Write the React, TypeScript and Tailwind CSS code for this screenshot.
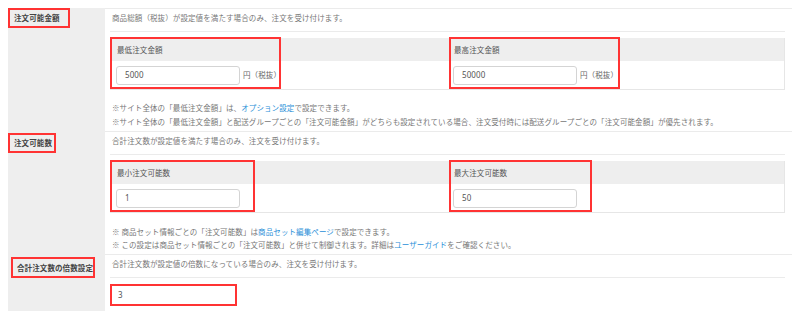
import * as React from "react";

const FONT = {
  fontFamily: '"Noto Sans CJK JP", "Noto Sans", sans-serif',
};
const NUM_FONT = {
  fontFamily: '"Noto Sans", "Noto Sans CJK JP", sans-serif',
};

function Label({ text, box }: { text: string; box: string }) {
  return (
    <div className="relative h-full w-[97px] shrink-0 bg-[#eeeeee]">
      <div
        className={`absolute flex items-center border-2 border-[#ff3333] pl-[4px] text-[7.5px] font-semibold text-[#444] ${box}`}
      >
        {text}
      </div>
    </div>
  );
}

function Desc({ children }: { children: React.ReactNode }) {
  return (
    <div className="h-[23px] border-b border-[#ebebeb] pl-[2px] pt-[3px] text-[7.5px] leading-[12px] text-[#777]">
      {children}
    </div>
  );
}

function Field({
  title,
  value,
  unit,
  boxWidth,
}: {
  title: string;
  value: string;
  unit?: string;
  boxWidth: string;
}) {
  return (
    <div className="relative flex-1">
      <div className="flex h-[23px] items-center bg-[#eeeeee] pl-[7px] text-[7.5px] text-[#555]">
        {title}
      </div>
      <div className="flex h-[28px] items-center pl-[6px]">
        <div
          className="flex h-[19px] w-[124px] items-center rounded-[3px] border border-[#d4d4d4] bg-white pl-[8px] text-[8px] text-[#555]"
          style={NUM_FONT}
        >
          {value}
        </div>
        {unit && <span className="ml-[3px] text-[7.5px] text-[#666]">{unit}</span>}
      </div>
      <div
        className={`pointer-events-none absolute -top-px h-[52px] border-2 border-[#ff3333] ${boxWidth}`}
      />
    </div>
  );
}

const Link = ({ children }: { children: React.ReactNode }) => (
  <span className="text-[#2a8fd8]">{children}</span>
);

export default function App() {
  return (
    <div className="h-[321px] w-[800px] bg-white px-2 pt-2 tracking-[0.1px]" style={FONT}>
      {/* 注文可能金額 */}
      <div className="flex h-[123px]">
        <Label text="注文可能金額" box="left-0 top-0 h-[20px] w-[62px]" />
        <div className="flex-1 border-t border-[#ebebeb] pl-[5px] pr-[7px]">
          <Desc>商品総額（税抜）が設定値を満たす場合のみ、注文を受け付けます。</Desc>
          <div className="mt-[6px] flex border-b border-r border-[#e6e6e6]">
            <Field title="最低注文金額" value="5000" unit="円（税抜）" boxWidth="left-0 w-[171px]" />
            <Field title="最高注文金額" value="50000" unit="円（税抜）" boxWidth="left-[2px] w-[171px]" />
          </div>
          <div className="mt-[11px] pl-[2px] text-[7.5px] leading-[14px] text-[#777]">
            <div>
              ※サイト全体の「最低注文金額」は、<Link>オプション設定</Link>で設定できます。
            </div>
            <div>
              ※サイト全体の「最低注文金額」と配送グループごとの「注文可能金額」がどちらも設定されている場合、注文受付時には配送グループごとの「注文可能金額」が優先されます。
            </div>
          </div>
        </div>
      </div>

      {/* 注文可能数 */}
      <div className="flex h-[123px]">
        <Label text="注文可能数" box="left-0 top-[2px] h-[20px] w-[48px]" />
        <div className="flex-1 border-t border-[#ebebeb] pl-[5px] pr-[7px]">
          <Desc>合計注文数が設定値を満たす場合のみ、注文を受け付けます。</Desc>
          <div className="mt-[6px] flex border-b border-r border-[#e6e6e6]">
            <Field title="最小注文可能数" value="1" boxWidth="left-0 w-[145px]" />
            <Field title="最大注文可能数" value="50" boxWidth="left-[2px] w-[143px]" />
          </div>
          <div className="mt-[12px] pl-[2px] text-[7.5px] leading-[13px] text-[#777]">
            <div>
              ※ 商品セット情報ごとの「注文可能数」は<Link>商品セット編集ページ</Link>で設定できます。
            </div>
            <div>
              ※ この設定は商品セット情報ごとの「注文可能数」と併せて制御されます。詳細は<Link>ユーザーガイド</Link>をご確認ください。
            </div>
          </div>
        </div>
      </div>

      {/* 合計注文数の倍数設定 */}
      <div className="flex h-[57px]">
        <Label text="合計注文数の倍数設定" box="left-[3px] top-[3px] h-[21px] w-[84px]" />
        <div className="flex-1 border-t border-[#ebebeb] pl-[5px] pr-[7px]">
          <Desc>合計注文数が設定値の倍数になっている場合のみ、注文を受け付けます。</Desc>
          <div
            className="mt-[6px] flex h-[22px] w-[127px] items-center border-2 border-[#ff3333] bg-white pl-[6px] text-[8px] text-[#555]"
            style={NUM_FONT}
          >
            3
          </div>
        </div>
      </div>
    </div>
  );
}
